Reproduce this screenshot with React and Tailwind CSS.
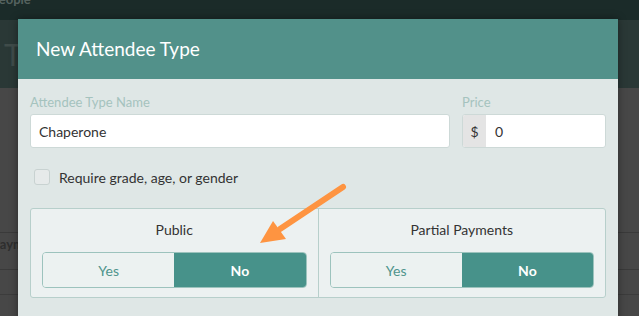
import React from 'react';

const font = { fontFamily: 'Lato, "Open Sans", sans-serif' };

function Toggle() {
  return (
    <div className="flex h-[36px] rounded-[4px] border border-[#9cc3bd] overflow-hidden">
      <div className="flex-1 flex items-center justify-center bg-[#ecf2f1] text-[14px] text-[#4f948c]">
        Yes
      </div>
      <div className="flex-1 flex items-center justify-center bg-[#47928a] text-[14px] font-bold text-white">
        No
      </div>
    </div>
  );
}

function Choice({ label, border }) {
  return (
    <div className={`flex-1 px-[11px] pt-[10px] pb-[10px] ${border ? 'border-l border-[#b7cfcb]' : ''}`}>
      <div className="text-center text-[14px] text-[#333] h-[22px] leading-[22px]">{label}</div>
      <div className="mt-[11px]">
        <Toggle />
      </div>
    </div>
  );
}

export default function App() {
  return (
    <div className="relative w-[639px] h-[316px] overflow-hidden bg-[#474747]" style={font}>
      {/* page behind the overlay */}
      <div className="h-[20px] bg-[#1b2b29] overflow-hidden">
        <div className="mt-[-8px] ml-[-9px] text-[13px] font-bold text-[#55625f] leading-[14px]">People</div>
      </div>
      <div className="h-[68px] bg-[#2a3836] pl-[4px] pt-[18px] text-[30px] leading-[32px] text-[#404c4a]">Ty</div>
      <div className="h-[144px]" />
      <div className="h-[38px] border-t border-[#3a3a3a] border-b text-[13px] font-bold text-[#2e2e2e] leading-[22px]">
        <span className="ml-[-8px]">Payments</span>
      </div>
      <div className="h-[25px] border-b border-[#3c3c3c]" />

      {/* modal */}
      <div className="absolute left-[18px] top-[19px] w-[600px] h-[320px] bg-[#dfe7e6] shadow-[0_0_8px_rgba(0,0,0,0.4)]">
        <div className="h-[60px] bg-[#52918a] flex items-center pl-[18px]">
          <span className="text-[19px] text-white">New Attendee Type</span>
        </div>
        <div className="px-[12px] pt-[15px]">
          <div className="flex gap-[12px]">
            <div className="w-[420px]">
              <div className="text-[13px] leading-[16px] text-[#a5c3be] mb-[4px]">Attendee Type Name</div>
              <div className="h-[34px] rounded-[3px] border border-[#cdd9d7] bg-white flex items-center px-[8px] text-[14px] text-[#333]">
                Chaperone
              </div>
            </div>
            <div className="flex-1">
              <div className="text-[13px] leading-[16px] text-[#a5c3be] mb-[4px]">Price</div>
              <div className="h-[34px] rounded-[3px] border border-[#cdd9d7] bg-white flex overflow-hidden text-[14px] text-[#333]">
                <div className="w-[23px] bg-[#e4e4e4] flex items-center justify-center">$</div>
                <div className="flex items-center pl-[9px]">0</div>
              </div>
            </div>
          </div>

          <div className="flex items-center mt-[21px] pl-[4px] h-[16px]">
            <div className="w-[16px] h-[16px] rounded-[3px] border border-[#c8d2d1] bg-[#e6eaea]" />
            <span className="ml-[9px] text-[14px] text-[#333]">Require grade, age, or gender</span>
          </div>

          <div className="mt-[23px] flex h-[90px] rounded-[3px] border border-[#b7cfcb] bg-[#ecf1f1]">
            <Choice label="Public" />
            <Choice label="Partial Payments" border />
          </div>
        </div>
      </div>

      {/* annotation arrow */}
      <svg className="absolute left-0 top-0" width="639" height="316">
        <line x1="343" y1="187" x2="280" y2="229" stroke="#fe9441" strokeWidth="6" strokeLinecap="round" />
        <polygon points="260,243 273,221 286,239" fill="#fe9441" />
      </svg>
    </div>
  );
}
